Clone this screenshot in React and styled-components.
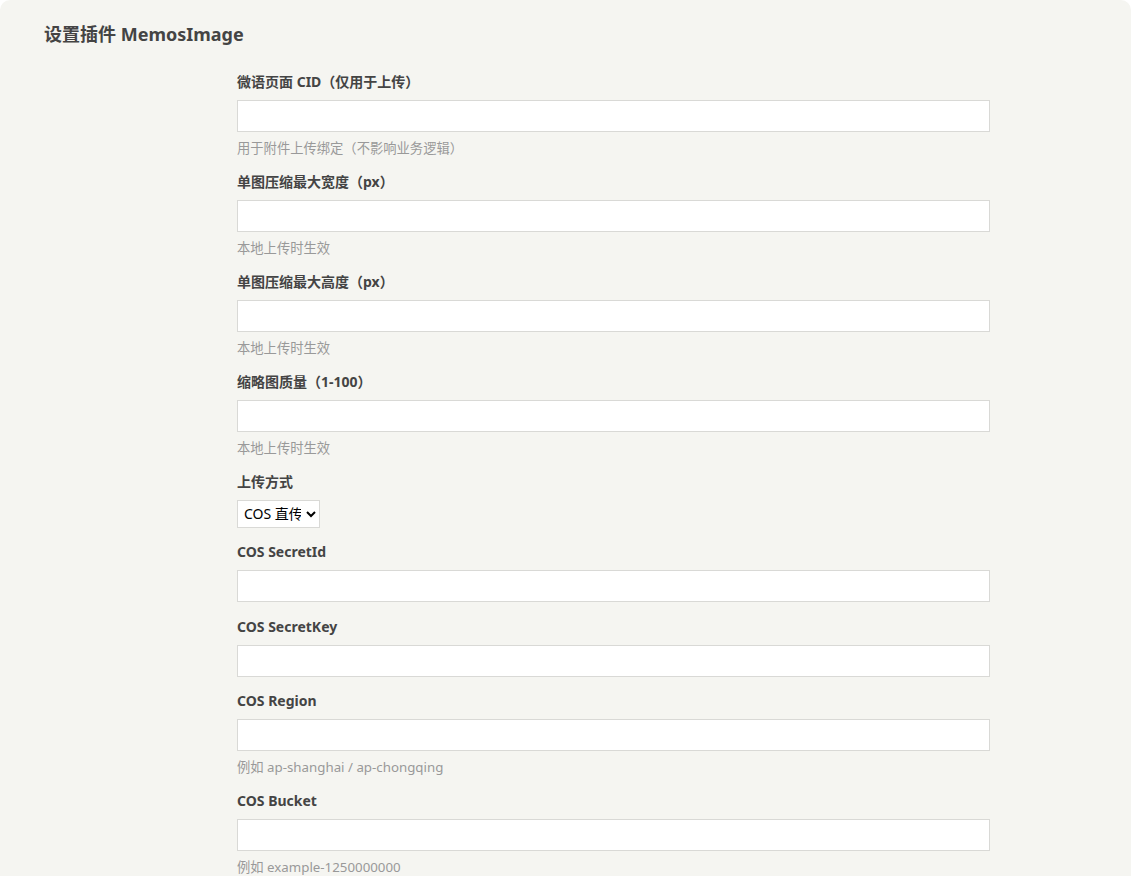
import React from 'react';
import styled, { createGlobalStyle } from 'styled-components';

const GlobalStyle = createGlobalStyle`
  html, body {
    margin: 0;
    background: #fff;
  }
  body {
    font-family: "Noto Sans", "Noto Sans CJK SC", sans-serif;
    font-size: 14px;
    color: #444;
  }
`

const Panel = styled.div`
  background: #f5f5f1;
  border-radius: 10px 10px 0 0;
  min-height: 876px;
  padding: 21px 44px 0;
  box-sizing: border-box;
`

const Title = styled.h2`
  margin: 0;
  font-size: 18px;
  line-height: 27px;
  height: 27px;
  font-weight: bold;
  color: #444;
`

const Form = styled.form`
  display: flex;
  flex-direction: column;
  margin: 23.5px 0 0 193px;
  width: 753px;
`

const Option = styled.ul`
  list-style: none;
  margin: 0 0 14.5px;
  padding: 0;
`

const Label = styled.label`
  display: block;
  font-weight: bold;
  line-height: 19px;
  height: 19px;
  margin-bottom: 9px;
  color: #444;
`

const TextInput = styled.input`
  display: block;
  box-sizing: border-box;
  width: 100%;
  height: 32px;
  border: 1px solid #d9d9d6;
  background: #fff;
  padding: 0 8px;
  font: inherit;
  outline: none;
`

const Select = styled.select`
  display: block;
  height: 28px;
  width: 83px;
  border: 1px solid #d9d9d6;
  background: #fff;
  color: #000;
  font-family: "Noto Sans", "Noto Sans CJK SC", sans-serif;
  font-size: 14px;
  padding: 0 2px;
  border-radius: 0;
`

const Description = styled.p`
  margin: 8px 0 0;
  font-size: 13.3px;
  line-height: 16px;
  height: 17.5px;
  color: #999;
`

const fields = [
  { label: '微语页面 CID（仅用于上传）', desc: '用于附件上传绑定（不影响业务逻辑）' },
  { label: '单图压缩最大宽度（px）', desc: '本地上传时生效' },
  { label: '单图压缩最大高度（px）', desc: '本地上传时生效' },
  { label: '缩略图质量（1-100）', desc: '本地上传时生效' },
  { label: '上传方式', select: true },
  { label: 'COS SecretId' },
  { label: 'COS SecretKey' },
  { label: 'COS Region', desc: '例如 ap-shanghai / ap-chongqing' },
  { label: 'COS Bucket', desc: '例如 example-1250000000' },
]

export default function App() {
  return (
    <>
      <GlobalStyle />
      <Panel>
        <Title>设置插件 MemosImage</Title>
        <Form>
          {fields.map((f, i) => (
            <Option key={i}>
              <li>
                <Label>{f.label}</Label>
                {f.select ? (
                  <Select defaultValue="cos">
                    <option value="cos">COS 直传</option>
                    <option value="local">本地上传</option>
                  </Select>
                ) : (
                  <TextInput type="text" />
                )}
                {f.desc && <Description>{f.desc}</Description>}
              </li>
            </Option>
          ))}
        </Form>
      </Panel>
    </>
  )
}
